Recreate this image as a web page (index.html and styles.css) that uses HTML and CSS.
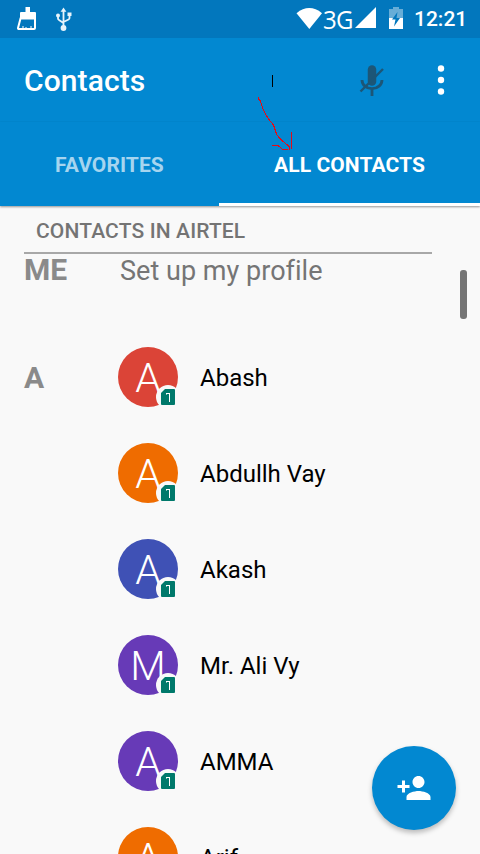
FILE: index.html
```html
<!DOCTYPE html>
<html lang="en">
<head>
<meta charset="utf-8">
<title>Contacts</title>
<link rel="stylesheet" href="styles.css">
</head>
<body>
<svg width="0" height="0" class="defs">
  <symbol id="sim" viewBox="0 0 22 22">
    <circle cx="12" cy="12" r="12" fill="#f9f9f9"/>
    <path d="M9 4h9q1 0 1 1v14q0 1-1 1H6q-1 0-1-1V8z" fill="#00796b"/>
    <path d="M10 8.500h4M13.500 8v9" fill="none" stroke="#fff"/>
    <path d="M10.500 9v1" stroke="#8cc3bc"/>
  </symbol>
</svg>
<div class="screen">
  <div class="statusbar">
    <svg class="status-left" width="80" height="38" viewBox="0 0 80 38">
      <path d="M25.500 7h4.500v5h5q1 0 1 1v5H20v-5q0-1 1-1h4.500z" fill="#fff"/>
      <path d="M20.500 18.500L18 28q-.2 1 1 1h15q1 0 1-1v-9.500z" fill="none" stroke="#fff" stroke-width="2"/>
      <path d="M23 26v2M26 27v1M31 26v2" stroke="#fff"/>
      <g fill="none" stroke="#e8f4fb" stroke-width="1.800">
        <path d="M63.500 10v18M58 16v2.500q0 1 1 1.500l4.500 3M69.500 15v3q0 1-1 1.500l-5 2.500"/>
      </g>
      <path d="M63.500 7.500l2.900 4.200h-5.800z" fill="#e8f4fb"/>
      <circle cx="58" cy="15.500" r="2" fill="#e8f4fb"/>
      <path d="M67.500 12.500h4v3.500h-4z" fill="#e8f4fb"/>
      <circle cx="63.500" cy="28" r="2.900" fill="#e8f4fb"/>
    </svg>
    <div class="status-right">
      <svg width="27" height="38" viewBox="0 0 27 38"><path d="M.5 13.200Q13.300 3 26 13.200L13.300 29z" fill="#fff"/></svg>
      <span class="network">3G</span>
      <svg class="signal" width="22" height="38" viewBox="0 0 22 38"><path d="M0 28L21 7v21z" fill="#fff"/></svg>
      <svg class="battery" width="14" height="38" viewBox="0 0 14 38">
        <path d="M0 9h4V7h6v2h4v10H0z" fill="#67add7"/>
        <path d="M0 18h14v11H0z" fill="#fff"/>
        <path d="M8.500 12L3 19.500h3.500L5 26.500l6-8.500H7.500z" fill="#0277bd"/>
      </svg>
      <span class="clock">12:21</span>
    </div>
  </div>
  <header class="appbar">
    <h1>Contacts</h1>
    <svg class="mic" width="26" height="36" viewBox="0 0 26 36">
      <g stroke="#1c5677" fill="none">
        <path d="M13 7.500v12" stroke-width="8.500" stroke-linecap="round"/>
        <path d="M3 18a10 8.700 0 0 0 20 0M13 26.500V34" stroke-width="2.800"/>
        <path d="M1.500 29.500L24 7" stroke-width="2.400"/>
      </g>
    </svg>
    <svg class="more" width="8" height="32" viewBox="0 0 8 32" fill="#fff"><circle cx="4" cy="4.500" r="3.200"/><circle cx="4" cy="16" r="3.200"/><circle cx="4" cy="27.500" r="3.200"/></svg>
  </header>
  <nav class="tabs">
    <div class="tab"><span>FAVORITES</span></div>
    <div class="tab active"><span>ALL CONTACTS</span></div>
  </nav>
  <main>
    <h2><span>CONTACTS IN AIRTEL</span></h2>
    <div class="me"><span class="index">ME</span><span class="setup">Set up my profile</span></div>
    <div class="row"><span class="index">A</span><div class="avatar red"><span>A</span><svg><use href="#sim"/></svg></div><span class="name">Abash</span></div>
    <div class="row"><span class="index"></span><div class="avatar orange"><span>A</span><svg><use href="#sim"/></svg></div><span class="name">Abdullh Vay</span></div>
    <div class="row"><span class="index"></span><div class="avatar indigo"><span>A</span><svg><use href="#sim"/></svg></div><span class="name">Akash</span></div>
    <div class="row"><span class="index"></span><div class="avatar purple"><span>M</span><svg><use href="#sim"/></svg></div><span class="name">Mr. Ali Vy</span></div>
    <div class="row"><span class="index"></span><div class="avatar purple"><span>A</span><svg><use href="#sim"/></svg></div><span class="name">AMMA</span></div>
    <div class="row"><span class="index"></span><div class="avatar orange"><span>A</span><svg><use href="#sim"/></svg></div><span class="name">Arif</span></div>
  </main>
  <div class="scrollbar"></div>
  <div class="fab">
    <svg width="36" height="36" viewBox="0 0 24 24" fill="#fff"><path d="M15 12c2.210 0 4-1.790 4-4s-1.790-4-4-4-4 1.790-4 4 1.790 4 4 4zm-9-2V7H4v3H1v2h3v3h2v-3h3v-2H6zm9 4c-2.670 0-8 1.340-8 4v2h16v-2c0-2.660-5.330-4-8-4z"/></svg>
  </div>
  <svg class="scribble" width="40" height="84" viewBox="0 0 40 84" fill="none" shape-rendering="crispEdges">
    <path d="M16.500 5v12" stroke="#000"/>
    <path d="M2.500 27v2l2 2 2 7 3 6 3 5 5 6 3 9 2 3 4 4 5 4 2 2v3M35.500 62v17M16 75.500h6l4 3.500h6" stroke="#e30b17"/>
  </svg>
</div>
</body>
</html>
```
FILE: styles.css
```css
* { box-sizing: border-box; }
body { margin: 0; font-family: Roboto, "Liberation Sans", sans-serif; }
.defs { position: absolute; }
svg { display: block; flex: none; }
.screen { position: relative; width: 480px; height: 854px; overflow: hidden; background: #f9f9f9; }
.statusbar { height: 38px; background: #0277bd; display: flex; justify-content: space-between; color: #fff; }
.status-right { display: flex; align-items: center; padding-right: 12px; }
.network { font: 24px/36px "Open Sans", sans-serif; letter-spacing: -.8px; width: 32px; white-space: nowrap; transform: scaleY(1.08); }
.signal { margin-right: 12px; }
.battery { margin-right: 11px; }
.clock { width: 54px; font-size: 21px; font-weight: 500; line-height: 39px; padding-top: 1px; white-space: nowrap; }
.appbar { height: 84px; background: #0288d1; display: flex; align-items: center; padding: 0 35px 0 24px; }
h1 { margin: 0; flex: 1; font-size: 30px; font-weight: 500; line-height: 36px; padding-top: 2px; color: #fff; letter-spacing: .1px; }
.mic { margin-right: 52px; }
.tabs { height: 84px; background: #0288d1; display: flex; box-shadow: 0 1px 2px rgba(0,0,0,.4); position: relative; }
.tab { width: 219px; text-align: center; font-size: 21px; font-weight: 700; line-height: 86px; letter-spacing: .08px; color: #a6d5ef; }
.tab.active { width: 261px; color: #fff; border-bottom: 3px solid #fff; }
main { display: flex; flex-direction: column; }
h2 { margin: 0 48px 0 24px; padding-left: 12px; height: 48px; border-bottom: 2px solid #a8a8a8; font-size: 21px; font-weight: 500; line-height: 50px; letter-spacing: .14px; color: #747474; flex: none; }
.me { height: 75px; padding: 0 24px; display: flex; line-height: 34px; flex: none; }
.index { width: 94px; flex: none; font-size: 30px; font-weight: 700; color: #8a8a8a; }
.me .index { width: 96px; line-height: 32px; }
.setup { font-size: 27px; color: #757575; letter-spacing: .03px; }
.row { height: 96px; padding-left: 24px; display: flex; align-items: center; flex: none; }
.avatar { width: 60px; height: 60px; border-radius: 50%; margin-right: 22px; position: relative; color: #fff; font-size: 41px; font-weight: 300; line-height: 62px; text-align: center; }
.avatar svg { position: absolute; left: 38px; top: 38px; width: 22px; height: 22px; }
.red { background: #db4437; }
.orange { background: #ef6c00; }
.indigo { background: #3f51b5; }
.purple { background: #673ab7; }
.name { font-size: 24px; color: #000; white-space: nowrap; line-height: 32px; padding-top: 2px; }
.scrollbar { position: absolute; left: 460px; top: 270px; width: 7px; height: 49px; border-radius: 3px; background: #757575; }
.fab { position: absolute; left: 372px; top: 746px; width: 84px; height: 84px; border-radius: 50%; background: #0288d1; display: flex; align-items: center; justify-content: center; box-shadow: 0 3px 5px rgba(0,0,0,.25); }
.scribble { position: absolute; left: 256px; top: 70px; }
```
